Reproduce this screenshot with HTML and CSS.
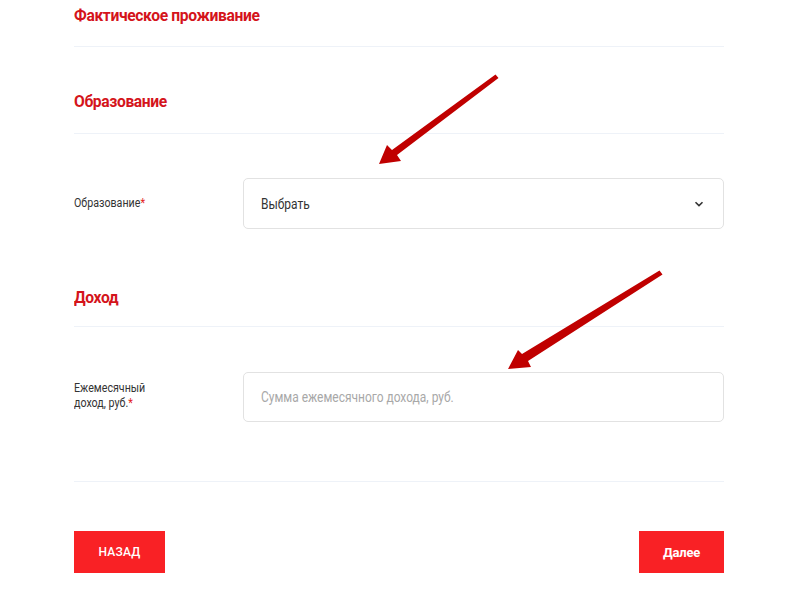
FILE: index.html
```html
<!DOCTYPE html>
<html lang="ru">
<head>
<meta charset="utf-8">
<link rel="stylesheet" href="styles.css">
</head>
<body>
<div class="page">
  <div class="form">
    <div class="section first">
      <h2 class="title">Фактическое проживание</h2>
    </div>
    <div class="section">
      <h2 class="title">Образование</h2>
    </div>
    <div class="row row-select">
      <label class="label">Образование<span class="req">*</span></label>
      <div class="control select">
        <span class="ctext select-text">Выбрать</span>
        <svg class="chevron" width="10" height="6" viewBox="0 0 10 6"><path d="M1.5 1.2 L5 4.6 L8.5 1.2" fill="none" stroke="#333" stroke-width="1.6"/></svg>
      </div>
    </div>
    <div class="section income">
      <h2 class="title">Доход</h2>
    </div>
    <div class="row row-input">
      <label class="label">Ежемесячный<br>доход, руб.<span class="req">*</span></label>
      <div class="control input"><span class="ctext placeholder">Сумма ежемесячного дохода, руб.</span></div>
    </div>
    <div class="divider"></div>
    <div class="actions">
      <button class="btn btn-back">НАЗАД</button>
      <button class="btn btn-next">Далее</button>
    </div>
  </div>
  <svg class="arrows" width="800" height="610" viewBox="0 0 800 610">
    <g fill="#c00000">
      <polygon points="495.5,74.5 498.5,78 397,155 401,161 379,164 387,145 392,150"/>
      <polygon points="659.5,270.5 662.5,274.5 528,361 531,367 508,369 518,350 522,354"/>
    </g>
  </svg>
</div>
</body>
</html>
```
FILE: styles.css
```css
* { box-sizing: border-box; }
html, body { margin: 0; padding: 0; background: #fff; }
body { font-family: Roboto, "Noto Sans", Arial, sans-serif; color: #333; }
.page { position: relative; width: 800px; height: 610px; overflow: hidden; }
.form { margin-left: 74px; width: 650px; }
.section { border-bottom: 1px solid #eef2f8; }
.section.first { padding-top: 5px; padding-bottom: 21px; }
.section + .section { padding-top: 44px; padding-bottom: 22px; }
.section.income { padding-top: 58px; padding-bottom: 19px; }
.title {
  margin: 0;
  font-size: 17px;
  line-height: 20px;
  font-weight: 700;
  color: #d4141b;
  letter-spacing: -0.4px;
  transform: scaleX(0.92);
  transform-origin: left center;
}
.row { display: flex; align-items: center; }
.row-select { margin-top: 44px; }
.row-input { margin-top: 45px; }
.label {
  width: 169px;
  font-size: 12px;
  line-height: 15px;
  color: #333;
  transform: scaleX(0.89);
  transform-origin: left center;
}
.row-input .label { margin-top: -2px; }
.req { color: #e31e24; }
.control {
  flex: 1;
  height: 50px;
  border: 1px solid #e2e2e2;
  border-radius: 5px;
  display: flex;
  align-items: center;
  padding: 0 17px;
  font-size: 14px;
}
.select { height: 51px; justify-content: space-between; }
.ctext { display: inline-block; transform: scaleX(0.855); transform-origin: left center; white-space: nowrap; }
.select-text { color: #333; }
.chevron { margin-right: 2px; }
.placeholder { color: #a8a8a8; }
.divider { margin-top: 59px; border-bottom: 1px solid #eef2f8; }
.actions { display: flex; justify-content: space-between; margin-top: 49px; }
.btn {
  height: 42px;
  border: none;
  background: #f92125;
  color: #fff;
  font-family: Roboto, Arial, sans-serif;
  padding: 0;
}
.btn-back { width: 91px; font-size: 12px; font-weight: 500; letter-spacing: 0.2px; }
.btn-next { width: 85px; font-size: 13px; font-weight: 700; letter-spacing: -0.2px; }
.arrows { position: absolute; left: 0; top: 0; pointer-events: none; }
```
